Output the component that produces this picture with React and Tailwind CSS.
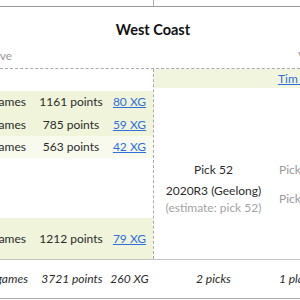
import React from "react";

const players = [
  { games: "98 games", points: "1161 points", xg: "80 XG", bg: "bg-[#f0f4da]", h: "h-[22px]" },
  { games: "71 games", points: "785 points", xg: "59 XG", bg: "bg-[#f0f4da]", h: "h-[23px]" },
  { games: "52 games", points: "563 points", xg: "42 XG", bg: "bg-[#f8faee]", h: "h-[22px]" },
];

const StatRow = ({ p, className }) => (
  <div className={`flex items-center ${p.bg} ${className}`}>
    <div className="w-[36px] shrink-0 flex justify-end pr-[10px] whitespace-nowrap">{p.games}</div>
    <div className="w-[70px] shrink-0 text-center whitespace-nowrap">{p.points}</div>
    <div className="w-[47px] shrink-0 text-center whitespace-nowrap">
      <a href="#" className="text-[#2f6fdc] underline">{p.xg}</a>
    </div>
  </div>
);

export default function App() {
  return (
    <div className="w-[300px] h-[300px] overflow-hidden bg-white font-['Lato','Liberation_Sans',sans-serif] text-[12px] text-[#2b2b2b]">
      {/* end of previous row */}
      <div className="flex h-[7px] border-b border-[#9a9a9a]">
        <div className="w-[154px] shrink-0 border-r border-[#aaa]" />
      </div>

      {/* team header */}
      <div className="h-[62px] border-b border-dashed border-[#aaa]">
        <div className="flex w-[306px] justify-center pt-[13px] text-[14.5px] font-bold leading-[20px] text-[#111]">
          West Coast
        </div>
        <div className="flex mt-[7px] leading-[18px] text-[#9a9a9a]">
          <div className="w-[12px] shrink-0 flex justify-end whitespace-nowrap">Receive</div>
          <div className="ml-[286px] shrink-0 whitespace-nowrap">Value</div>
        </div>
      </div>

      {/* body */}
      <div className="flex h-[191px] border-b border-[#c4c4c4]">
        <div className="w-[154px] shrink-0 border-r border-dashed border-[#aaa]">
          <div className="h-[22px]" />
          {players.map((p) => (
            <StatRow key={p.xg} p={p} className={p.h} />
          ))}
          <div className="h-[60px]" />
          <StatRow
            p={{ games: "104 games", points: "1212 points", xg: "79 XG", bg: "bg-[#f0f4da]" }}
            className="h-[41px]"
          />
        </div>

        <div className="flex-1 min-w-0">
          <div className="flex h-[19px] items-center bg-[#f2f5de]">
            <div className="w-[119px] shrink-0" />
            <div className="pl-[5px] shrink-0 whitespace-nowrap">
              <a href="#" className="text-[#2f6fdc] underline">Tim Kelly</a>
            </div>
          </div>
          <div className="pt-[72px]">
            <div className="flex h-[20px] items-center">
              <div className="w-[119px] shrink-0 text-center">Pick 52</div>
              <div className="pl-[6px] shrink-0 whitespace-nowrap text-[#9a9a9a]">Pick 20</div>
            </div>
            <div className="flex mt-[2px] items-center">
              <div className="w-[119px] shrink-0 text-center leading-[17px] whitespace-nowrap">
                <div>2020R3 (Geelong)</div>
                <div className="text-[#a3a3a3]">(estimate: pick 52)</div>
              </div>
              <div className="pl-[6px] shrink-0 whitespace-nowrap text-[#9a9a9a]">Pick 41</div>
            </div>
          </div>
        </div>
      </div>

      {/* totals */}
      <div className="flex h-[39px] items-center border-b border-[#aaa] italic">
        <div className="flex w-[154px] shrink-0 items-center">
          <div className="w-[38px] shrink-0 flex justify-end pr-[10px] whitespace-nowrap">325 games</div>
          <div className="w-[68px] shrink-0 text-center whitespace-nowrap">3721 points</div>
          <div className="w-[47px] shrink-0 text-center whitespace-nowrap">260 XG</div>
        </div>
        <div className="w-[119px] shrink-0 text-center whitespace-nowrap">2 picks</div>
        <div className="pl-[6px] shrink-0 whitespace-nowrap">1 player</div>
      </div>
    </div>
  );
}
